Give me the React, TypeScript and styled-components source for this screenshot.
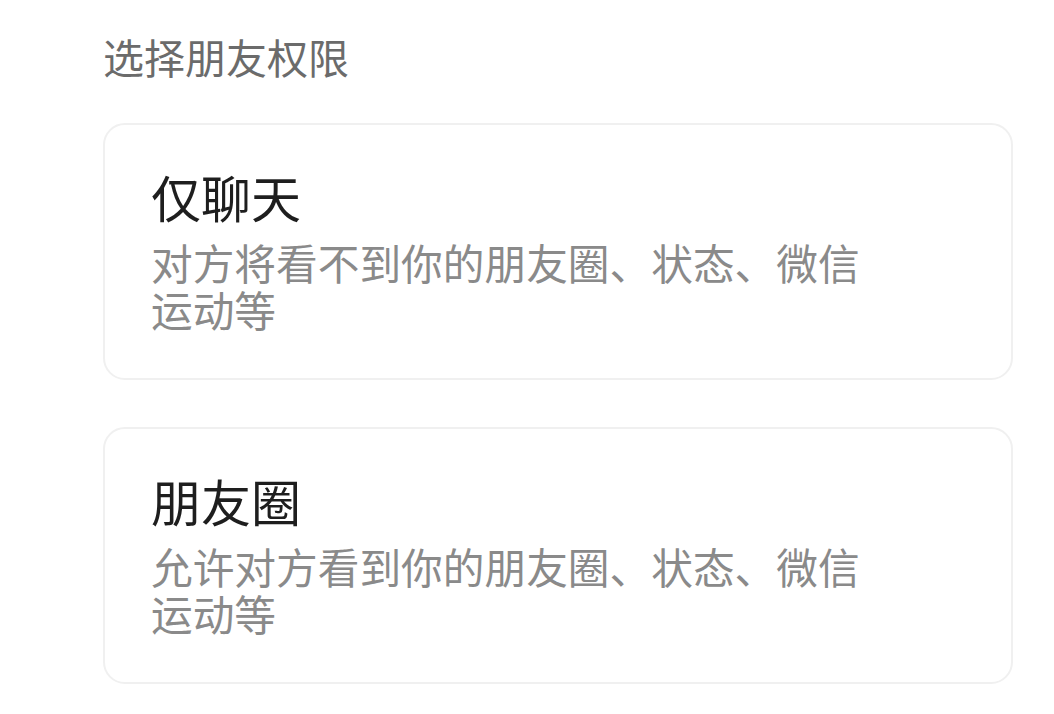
import React from "react";
import styled, { createGlobalStyle } from "styled-components";

const Global = createGlobalStyle`
  html, body { margin: 0; padding: 0; background: #ffffff; }
  body { font-family: "Noto Sans CJK SC", "Noto Sans", sans-serif; }
`;

const Page = styled.div`
  width: 1054px;
  height: 714px;
  box-sizing: border-box;
  padding: 26px 41px 0 103px;
  display: flex;
  flex-direction: column;
  background: #ffffff;
  overflow: hidden;
`;

const Heading = styled.div`
  font-size: 41px;
  line-height: 60px;
  color: #6b6b6b;
  margin-bottom: 37px;
`;

const List = styled.div`
  display: flex;
  flex-direction: column;
  gap: 47px;
`;

const Card = styled.div`
  height: 257px;
  box-sizing: border-box;
  border: 2px solid #f0f0f0;
  border-radius: 22px;
  background: #ffffff;
  padding: 39px 40px 0 46px;
  display: flex;
  flex-direction: column;
`;

const Title = styled.div`
  font-size: 50px;
  line-height: 64px;
  color: #1e1e1e;
  margin-bottom: 11px;
`;

const Desc = styled.div`
  font-size: 41.7px;
  line-height: 47px;
  color: #8a8a8a;
  max-width: 740px;
`;

const options = [
  { title: "仅聊天", desc: "对方将看不到你的朋友圈、状态、微信运动等" },
  { title: "朋友圈", desc: "允许对方看到你的朋友圈、状态、微信运动等" },
];

export default function App() {
  return (
    <>
      <Global />
      <Page>
        <Heading>选择朋友权限</Heading>
        <List>
          {options.map((o) => (
            <Card key={o.title}>
              <Title>{o.title}</Title>
              <Desc>{o.desc}</Desc>
            </Card>
          ))}
        </List>
      </Page>
    </>
  );
}
